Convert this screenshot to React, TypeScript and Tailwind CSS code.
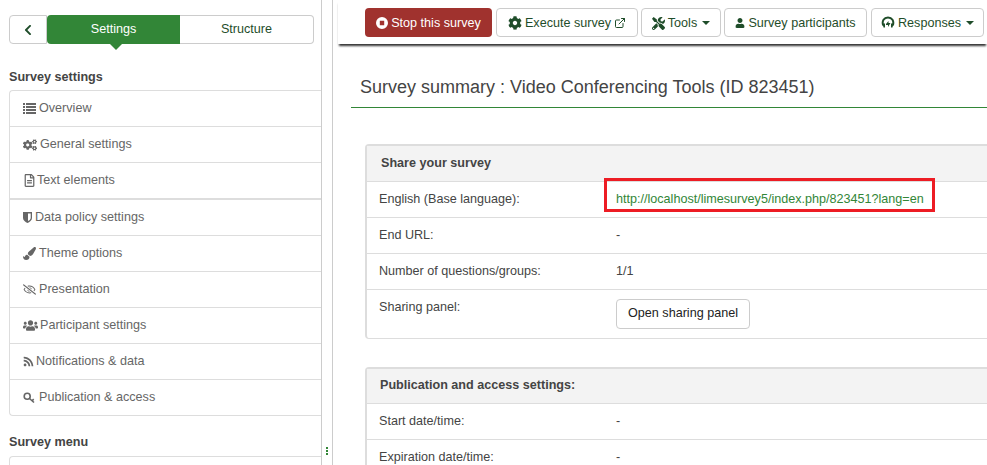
import React from "react";
import { FaCogs, FaRegFileAlt, FaPaintBrush, FaRegEyeSlash, FaUsers, FaRss, FaCog, FaTools, FaUser, FaChevronLeft } from "react-icons/fa";
import { ExternalLink } from "lucide-react";

const ListIcon = (
  <svg width="13" height="11" viewBox="0 0 13 11" fill="currentColor">
    <path d="M0 0h2v2H0zM3 0h10v2H3zM0 3h2v2H0zM3 3h10v2H3zM0 6h2v2H0zM3 6h10v2H3zM0 9h2v2H0zM3 9h10v2H3z" />
  </svg>
);
const ShieldIcon = (
  <svg width="9" height="11" viewBox="0 0 9 11" fill="currentColor">
    <path fillRule="evenodd" d="M0 0h9v6c0 2.5-2.500 4-4.500 5C2.500 10 0 8.500 0 6zM5 1.500v7.600C6.500 8.200 7.700 7.200 7.700 6V1.500z" />
  </svg>
);
const KeyIcon = (
  <svg width="13" height="12" viewBox="0 0 13 12" fill="none" stroke="currentColor" strokeWidth="1.600">
    <circle cx="4.200" cy="4.200" r="3" />
    <path d="M6.500 6.500 11 10.500M9 8.800l1.700-1.600" />
  </svg>
);

const items: [React.ReactNode, string, string, string][] = [
  [ListIcon, "Overview", "h-[35px]", "w-[16px]"],
  [<FaCogs size={14} />, "General settings", "h-[36px]", "w-[17px]"],
  [<FaRegFileAlt size={13} />, "Text elements", "h-[36px]", "w-[14px]"],
  [ShieldIcon, "Data policy settings", "h-[37px] border-t-2", "w-[12px]"],
  [<FaPaintBrush size={13} />, "Theme options", "h-[36px]", "w-[16px]"],
  [<FaRegEyeSlash size={13} />, "Presentation", "h-[36px]", "w-[16px]"],
  [<FaUsers size={15} />, "Participant settings", "h-[36px]", "w-[17px]"],
  [<FaRss size={11} />, "Notifications & data", "h-[36px]", "w-[13px]"],
  [KeyIcon, "Publication & access", "h-[36px]", "w-[16px]"],
];

function Caret() {
  return <span className="inline-block w-0 h-0 ml-[2px] border-x-[4px] border-x-transparent border-t-[4px] border-t-current" />;
}

function ToolBtn({ className, children }: { className: string; children: React.ReactNode }) {
  return (
    <div className={`h-[29px] flex items-center justify-center gap-[3px] rounded-[4px] border border-[#cccccc] bg-white text-[#1f4d2a] pt-[1px] ${className}`}>
      {children}
    </div>
  );
}

function Row({ label, value }: { label: string; value: string }) {
  return (
    <div className="h-[36px] flex items-center text-[#444444] border-b border-[#dddddd]">
      <div className="w-[249px] pl-[12px] shrink-0">{label}</div>
      <div>{value}</div>
    </div>
  );
}

export default function App() {
  return (
    <div className="w-[987px] h-[465px] overflow-hidden flex bg-white text-[12.6px] font-['Liberation_Sans',Arial,sans-serif]">
      <aside className="w-[322px] h-[465px] shrink-0 border-r border-[#cccccc] pt-[15px] pl-[9px] overflow-hidden">
        <div className="flex w-[305px] h-[29px] relative">
          <div className="w-[38px] flex items-center justify-center border border-[#cccccc] rounded-l-[4px] text-[#1f4d2a]">
            <FaChevronLeft size={12} />
          </div>
          <div className="w-[133px] relative flex items-center justify-center bg-[#328637] text-white rounded-l-[4px]">
            Settings
            <span className="absolute left-[63px] top-full w-0 h-0 border-x-[6px] border-x-transparent border-t-[6px] border-t-[#328637]" />
          </div>
          <div className="flex-1 flex items-center justify-center border border-l-0 border-[#cccccc] rounded-r-[4px] text-[#1f4d2a]">
            Structure
          </div>
        </div>
        <div className="mt-[26px] h-[20px] font-bold text-[#444444] leading-[14px]">Survey settings</div>
        <div className="border border-r-0 border-[#dddddd] rounded-l-[4px] text-[#666666]">
          {items.map(([icon, label, cls, w], i) => (
            <div key={label} className={`flex items-center pl-[13px] border-[#dddddd] ${i ? "border-t" : ""} ${cls}`}>
              <span className={`shrink-0 ${w}`}>{icon}</span>
              <span>{label}</span>
            </div>
          ))}
        </div>
        <div className="mt-[19px] h-[21px] font-bold text-[#444444] leading-[14px]">Survey menu</div>
        <div className="h-[20px] border border-r-0 border-[#dddddd] rounded-l-[4px]" />
      </aside>
      <div className="w-[11px] h-[465px] shrink-0 border-r border-[#cccccc] flex justify-center pt-[447px]">
        <div className="flex flex-col gap-[1px]">
          <span className="w-[2px] h-[2px] bg-[#328637]" />
          <span className="w-[2px] h-[2px] bg-[#328637]" />
          <span className="w-[2px] h-[2px] bg-[#328637]" />
        </div>
      </div>
      <main className="flex-1 min-w-0 overflow-hidden">
        <div className="ml-[5px] h-[44px] pt-[8px] pl-[27px] flex gap-[3px] shadow-[0_3px_2px_-1px_#333333] whitespace-nowrap">
          <div className="w-[127px] h-[29px] mr-[1px] pt-[1px] flex items-center justify-center gap-[3px] rounded-[4px] bg-[#a0322e] text-white">
            <svg width="12" height="12" viewBox="0 0 12 12"><path fillRule="evenodd" fill="#fff" d="M6 0a6 6 0 1 1 0 12A6 6 0 0 1 6 0zM3.800 3.800v4.400h4.400V3.800z" /></svg>
            Stop this survey
          </div>
          <ToolBtn className="w-[142px]"><FaCog size={14} />Execute survey<ExternalLink size={12} strokeWidth={2} /></ToolBtn>
          <ToolBtn className="w-[80px]"><FaTools size={13} />Tools<Caret /></ToolBtn>
          <ToolBtn className="w-[143px] mr-[1px]"><FaUser size={10} />Survey participants</ToolBtn>
          <ToolBtn className="w-[113px] shrink-0">
            <svg width="14" height="14" viewBox="0 0 14 14" fill="none"><path d="M2.200 9.500C.6 5 3 1.500 7 1.500s6.400 3.500 4.800 8" stroke="currentColor" strokeWidth="2" /><path fill="currentColor" d="M1.500 7.500h2.500v4H2.500zM10 7.500h2.500l-1 4H10zM5 8l2.500-3v2h2L7 11V9H5z" /></svg>
            Responses<Caret />
          </ToolBtn>
        </div>
        <div className="ml-[18px] mt-[26px] h-[38px] border-b border-[#328637] pl-[9px] text-[18px] leading-[34px] text-[#444444] whitespace-nowrap">
          Survey summary : Video Conferencing Tools (ID 823451)
        </div>
        <div className="ml-[32px] w-[640px] mt-[36px] relative">
          <div className="border border-r-0 border-[#dddddd] border-t-2 border-l-2 rounded-l-[4px] h-[195px]">
            <div className="h-[36px] flex items-center pl-[14px] bg-[#f3f3f3] border-b border-[#dddddd] font-bold text-[#444444]">Share your survey</div>
            <Row label="English (Base language):" value="" />
            <Row label="End URL:" value="-" />
            <Row label="Number of questions/groups:" value="1/1" />
            <div className="h-[49px] flex text-[#444444]">
              <div className="w-[249px] pl-[12px] pt-[8px] shrink-0">Sharing panel:</div>
              <div className="pt-[9px]">
                <div className="h-[30px] w-[134px] flex items-center justify-center border border-[#cccccc] rounded-[4px] text-[#222222] pb-[2px]">Open sharing panel</div>
              </div>
            </div>
          </div>
          <div className="absolute left-[239px] top-[34px] w-[331px] h-[34px] border-[3px] border-[#ed1c24] flex items-center pl-[9px] pt-[8px] text-[#328637]">
            http://localhost/limesurvey5/index.php/823451?lang=en
          </div>
          <div className="mt-[28px] border border-r-0 border-[#dddddd] border-t-2 border-l-2 rounded-l-[4px]">
            <div className="h-[35px] flex items-center pl-[13px] pb-[2px] bg-[#f3f3f3] border-b border-[#dddddd] font-bold text-[#444444]">Publication and access settings:</div>
            <Row label="Start date/time:" value="-" />
            <Row label="Expiration date/time:" value="-" />
          </div>
        </div>
      </main>
    </div>
  );
}
